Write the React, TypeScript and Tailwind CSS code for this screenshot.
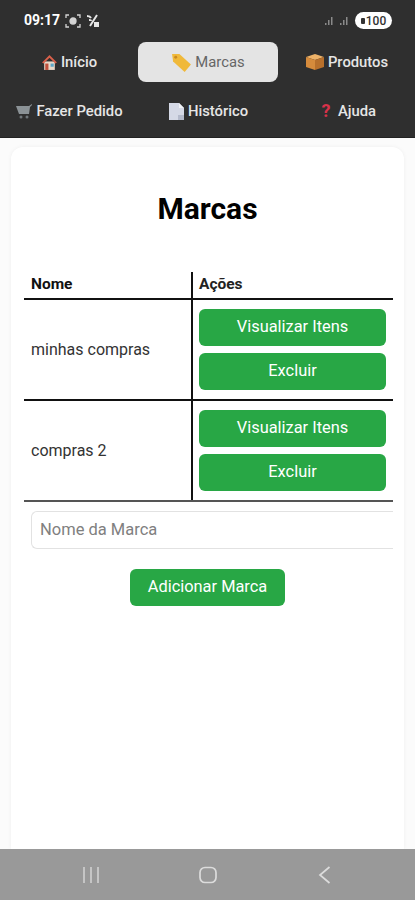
const font = { fontFamily: "Roboto, sans-serif" };

function HomeIcon() {
  return (
    <svg width="17" height="17" viewBox="0 0 16 16" className="shrink-0">
      <rect x="3" y="7" width="10" height="8" fill="#e8d8c8" />
      <path d="M1 8 8 1l7 7-1.5 1L8 3.5 2.5 9z" fill="#d9604a" />
      <rect x="4" y="9" width="3" height="6" fill="#c0503c" />
      <rect x="9" y="9" width="3" height="3" fill="#5fa8c8" />
    </svg>
  );
}

function TagIcon() {
  return (
    <svg width="21" height="21" viewBox="0 0 20 20" className="shrink-0">
      <path d="M1 2h7l11 10-6 7L2 9z" fill="#f0b93a" />
      <circle cx="4.5" cy="5" r="1.4" fill="#c98a20" />
    </svg>
  );
}

function BoxIcon() {
  return (
    <svg width="20" height="20" viewBox="0 0 20 20" className="shrink-0">
      <path d="M1 5l9-3 9 3-9 3z" fill="#edb268" />
      <path d="M1 5l9 3v10l-9-3z" fill="#d68b3c" />
      <path d="M19 5l-9 3v10l9-3z" fill="#b8702c" />
    </svg>
  );
}

function CartIcon() {
  return (
    <svg width="18" height="16" viewBox="0 0 18 16" className="shrink-0">
      <path d="M1 3h13l3-2v1l-2 2-1 7H4z" fill="#8b9296" />
      <circle cx="6" cy="14" r="1.5" fill="#70777b" />
      <circle cx="12" cy="14" r="1.5" fill="#70777b" />
    </svg>
  );
}

function DocIcon() {
  return (
    <svg width="17" height="19" viewBox="0 0 17 19" className="shrink-0">
      <path d="M1 1h10l5 5v12H1z" fill="#d5d9e6" />
      <path d="M11 1l5 5h-5z" fill="#f2f3f7" />
      <path d="M10 13h6v5h-6z" fill="#b4bacb" />
    </svg>
  );
}

function QuestionIcon() {
  return (
    <span className="w-[18px] text-center text-[#d8324a] text-[18px] font-bold leading-none" style={font}>
      ?
    </span>
  );
}

function NavItem({
  icon,
  label,
  active,
}: {
  icon: React.ReactNode;
  label: string;
  active?: boolean;
}) {
  return (
    <div
      className={
        active
          ? "flex items-center justify-center gap-[3px] h-10 rounded-lg bg-[#e4e4e4] text-[#666666] text-[14.8px]"
          : "flex items-center justify-center gap-[3px] h-10 text-[#e6e6e6] text-[14.8px] font-medium"
      }
    >
      {icon}
      <span>{label}</span>
    </div>
  );
}

function StatusBar() {
  return (
    <div className="flex items-center justify-between h-[42px] pl-[24px] pr-[23px] pb-[1px]">
      <div className="flex items-center gap-[5px]">
        <span className="text-white text-[14px] font-bold">09:17</span>
        <svg width="16" height="14" viewBox="0 0 16 14" fill="none" stroke="#d4d4d4" strokeWidth="1.3">
          <path d="M1 4V1h3M12 1h3v3M15 10v3h-3M4 13H1v-3" />
          <circle cx="8" cy="7" r="3" fill="#d4d4d4" />
        </svg>
        <svg width="14" height="14" viewBox="0 0 14 14" fill="none" stroke="#e6e6e6" strokeWidth="2">
          <path d="M1 2c2 0 3 0 4 2M3 6c1 0 2 0 2 1M11 1 4 12" />
          <rect x="8" y="8" width="5" height="5" fill="#e6e6e6" stroke="none" />
        </svg>
      </div>
      <div className="flex items-center gap-[4px]">
        <svg width="11" height="11" viewBox="0 0 11 11" fill="#8a8a8a">
          <rect x="1" y="8" width="1.5" height="2" />
          <rect x="4" y="5" width="1.5" height="5" />
          <rect x="7" y="2" width="1.5" height="8" />
        </svg>
        <svg width="12" height="11" viewBox="0 0 12 11" fill="#8a8a8a">
          <rect x="1" y="8" width="1.5" height="2" />
          <rect x="4" y="5" width="1.5" height="5" />
          <rect x="7" y="2" width="1.5" height="8" />
        </svg>
        <div className="flex items-center justify-center gap-[1px] w-[37px] h-[17px] rounded-full bg-white text-[#333333] text-[12px] font-medium">
          <span className="w-[4px] h-[6px] rounded-[1px] bg-[#333333]" />
          100
        </div>
      </div>
    </div>
  );
}

function Row({ name, last }: { name: string; last?: boolean }) {
  return (
    <div
      className={
        last
          ? "grid grid-cols-[167px_1fr] border-b-2 border-[#555555]"
          : "grid grid-cols-[167px_1fr] border-b-2 border-[#111111]"
      }
    >
      <div className="flex items-center pl-[7px] text-[16px] text-[#333333]">{name}</div>
      <div className="flex flex-col gap-[7px] border-l-2 border-[#111111] pl-[6px] pr-[7px] py-[9px]">
        <button className="h-[37px] rounded-md bg-[#28a745] text-white text-[16.4px]">
          Visualizar Itens
        </button>
        <button className="h-[37px] rounded-md bg-[#28a745] text-white text-[16.4px]">Excluir</button>
      </div>
    </div>
  );
}

export default function App() {
  return (
    <div className="flex flex-col h-[900px] bg-[#fbfbfb] overflow-hidden" style={font}>
      <header className="h-[138px] bg-[#2f2f2f] border-b border-[#222222]">
        <StatusBar />
        <div className="grid grid-cols-[138px_140px_1fr] px-0">
          <NavItem icon={<HomeIcon />} label="Início" />
          <NavItem icon={<TagIcon />} label="Marcas" active />
          <NavItem icon={<BoxIcon />} label="Produtos" />
        </div>
        <div className="grid grid-cols-[138px_140px_1fr] mt-[9px]">
          <NavItem icon={<CartIcon />} label="Fazer Pedido" />
          <NavItem icon={<DocIcon />} label="Histórico" />
          <NavItem icon={<QuestionIcon />} label="Ajuda" />
        </div>
      </header>

      <main className="flex-1 min-h-0 mx-[11px] mt-[9px] rounded-t-xl bg-white px-[13px] pt-[44px] shadow-[0_0_4px_rgba(0,0,0,0.05)] overflow-hidden">
        <h1 className="text-center text-[30px] leading-[36px] font-bold text-black">Marcas</h1>

        <div className="mt-[45px] w-[369px]">
          <div className="grid grid-cols-[167px_1fr] border-b-2 border-[#111111] h-[28px]">
            <div className="flex items-center pl-[7px] text-[15.5px] font-bold text-[#111111]">Nome</div>
            <div className="flex items-center border-l-2 border-[#111111] pl-[6px] text-[15.5px] font-bold text-[#222222]">
              Ações
            </div>
          </div>
          <Row name="minhas compras" />
          <Row name="compras 2" last />
        </div>

        <div className="ml-[7px] mt-[9px] w-[362px] h-[38px] flex items-center pl-[8px] rounded-l-md border border-r-0 border-[#e2e2e2] text-[16.5px] text-[#808080]">
          Nome da Marca
        </div>

        <div className="flex justify-center mt-[20px]">
          <button className="w-[155px] h-[37px] rounded-md bg-[#28a745] text-white text-[16.4px]">
            Adicionar Marca
          </button>
        </div>
      </main>

      <nav className="h-[51px] flex items-center bg-[#999999]">
        <div className="flex-1 flex justify-center pr-[18px]">
          <svg width="18" height="18" viewBox="0 0 18 18" stroke="#d0d0d0" strokeWidth="1.6">
            <path d="M2 1v16M9 1v16M16 1v16" />
          </svg>
        </div>
        <div className="flex justify-center mr-[3px]">
          <svg width="18" height="18" viewBox="0 0 18 18" fill="none" stroke="#dcdcdc" strokeWidth="1.7">
            <rect x="1" y="1.5" width="16" height="15" rx="5" />
          </svg>
        </div>
        <div className="flex-1 flex justify-center pl-[14px]">
          <svg width="13" height="18" viewBox="0 0 13 18" fill="none" stroke="#dcdcdc" strokeWidth="1.7">
            <path d="M11.5 1 2 9l9.5 8" />
          </svg>
        </div>
      </nav>
    </div>
  );
}
